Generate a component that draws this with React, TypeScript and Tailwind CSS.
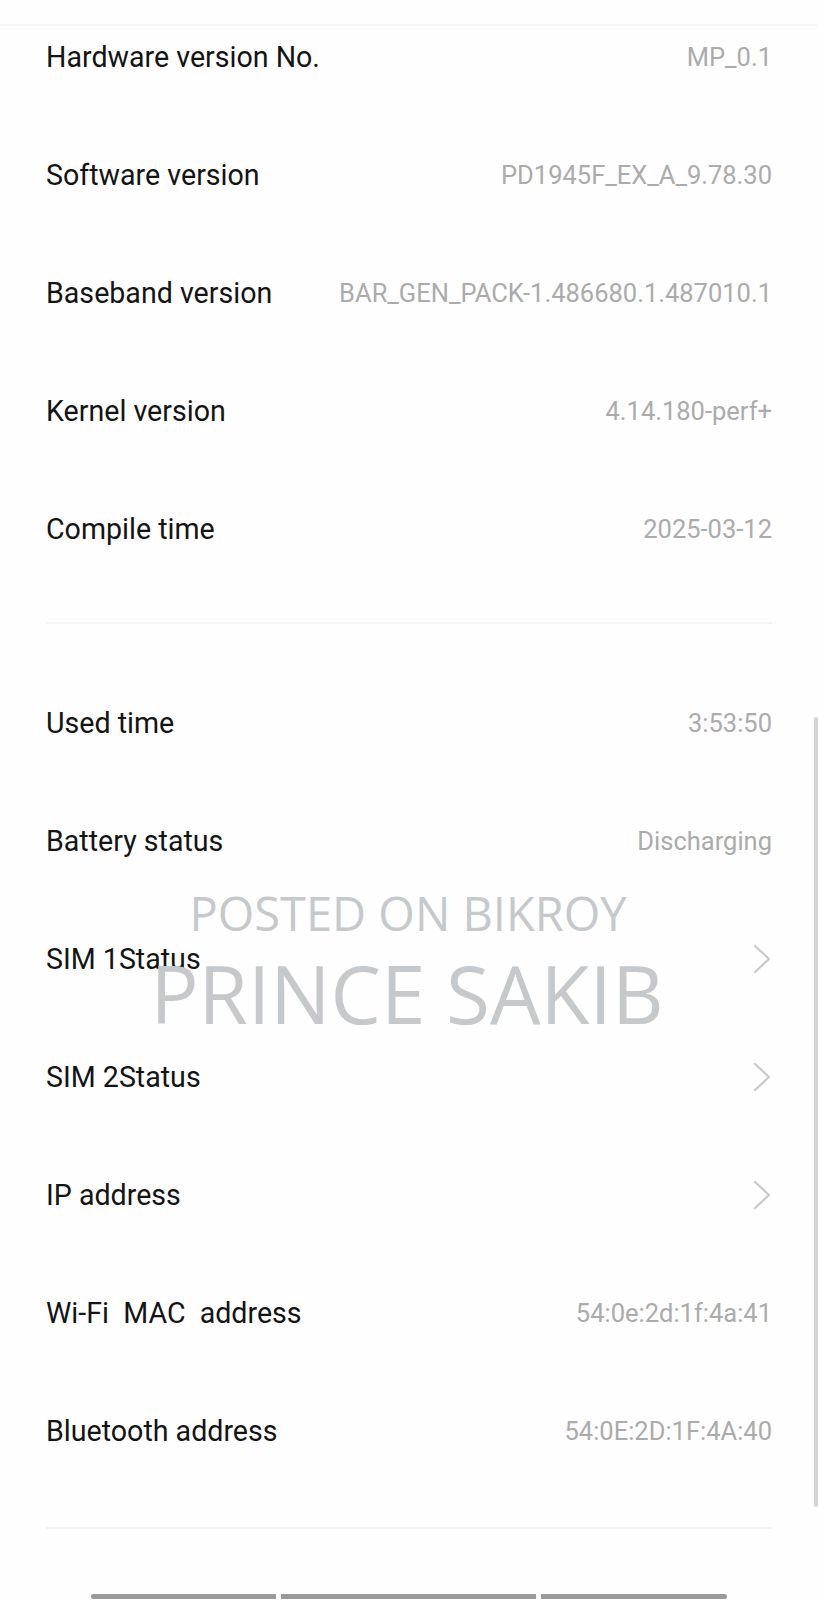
import React from "react";

type Row = { label: string; value?: string; chevron?: boolean };

const DEVICE_ROWS: Row[] = [
  { label: "Hardware version No.", value: "MP_0.1" },
  { label: "Software version", value: "PD1945F_EX_A_9.78.30" },
  { label: "Baseband version", value: "BAR_GEN_PACK-1.486680.1.487010.1" },
  { label: "Kernel version", value: "4.14.180-perf+" },
  { label: "Compile time", value: "2025-03-12" },
];

const STATUS_ROWS: Row[] = [
  { label: "Used time", value: "3:53:50" },
  { label: "Battery status", value: "Discharging" },
  { label: "SIM 1Status", chevron: true },
  { label: "SIM 2Status", chevron: true },
  { label: "IP address", chevron: true },
  { label: "Wi-Fi  MAC  address", value: "54:0e:2d:1f:4a:41" },
  { label: "Bluetooth address", value: "54:0E:2D:1F:4A:40" },
];

function Chevron() {
  return (
    <svg width="18" height="30" viewBox="0 0 18 30" fill="none" stroke="#c9c9c9" strokeWidth="2.2" strokeLinecap="round" strokeLinejoin="round">
      <path d="M2 2l14 13L2 28" />
    </svg>
  );
}

function InfoRow({ row }: { row: Row }) {
  return (
    <div className="h-[118px] flex items-center justify-between">
      <span className="text-[28.6px] text-[#141414] whitespace-pre">{row.label}</span>
      {row.chevron ? (
        <span className="mr-[1px] flex items-center">
          <Chevron />
        </span>
      ) : (
        <span className="text-[25.5px] text-[#ababab]">{row.value}</span>
      )}
    </div>
  );
}

export default function App() {
  return (
    <div
      className="relative w-[818px] h-[1600px] bg-[#fefefe] overflow-hidden"
      style={{ fontFamily: "Roboto, 'Liberation Sans', sans-serif" }}
    >
      {/* top bar edge */}
      <div className="relative z-10 h-[26px] bg-[#fefefe] border-b-2 border-[#f4f4f4]" />

      <div className="-mt-[28px] pl-[46px] pr-[46px]">
        {DEVICE_ROWS.map((r) => (
          <InfoRow key={r.label} row={r} />
        ))}
        <div className="h-[34px]" />
        <div className="h-[2px] bg-[#f4f4f4]" />
        <div className="h-[40px]" />
        {STATUS_ROWS.map((r) => (
          <InfoRow key={r.label} row={r} />
        ))}
        <div className="h-[37px]" />
        <div className="h-[2px] bg-[#f4f4f4]" />
      </div>

      {/* bottom bars */}
      <div className="mt-[65px] ml-[91px] flex gap-[5px]">
        <div className="w-[185px] h-[5px] rounded-l-full bg-[#9a9a9a]" />
        <div className="w-[255px] h-[5px] bg-[#9a9a9a]" />
        <div className="w-[186px] h-[5px] rounded-r-full bg-[#9a9a9a]" />
      </div>

      {/* scrollbar */}
      <div className="absolute left-[814px] top-[717px] w-[4px] h-[790px] rounded-full bg-[#d4d4d4]" />

      {/* watermark */}
      <div
        className="absolute left-0 right-0 top-[890px] flex flex-col items-center text-[#c6c9cc] pointer-events-none leading-none"
        style={{ fontFamily: "'Open Sans', 'Noto Sans', sans-serif" }}
      >
        <span className="text-[47px] ml-[-2px]">POSTED ON BIKROY</span>
        <span className="text-[80px] mt-[16px] ml-[-4px]">PRINCE SAKIB</span>
      </div>
    </div>
  );
}
